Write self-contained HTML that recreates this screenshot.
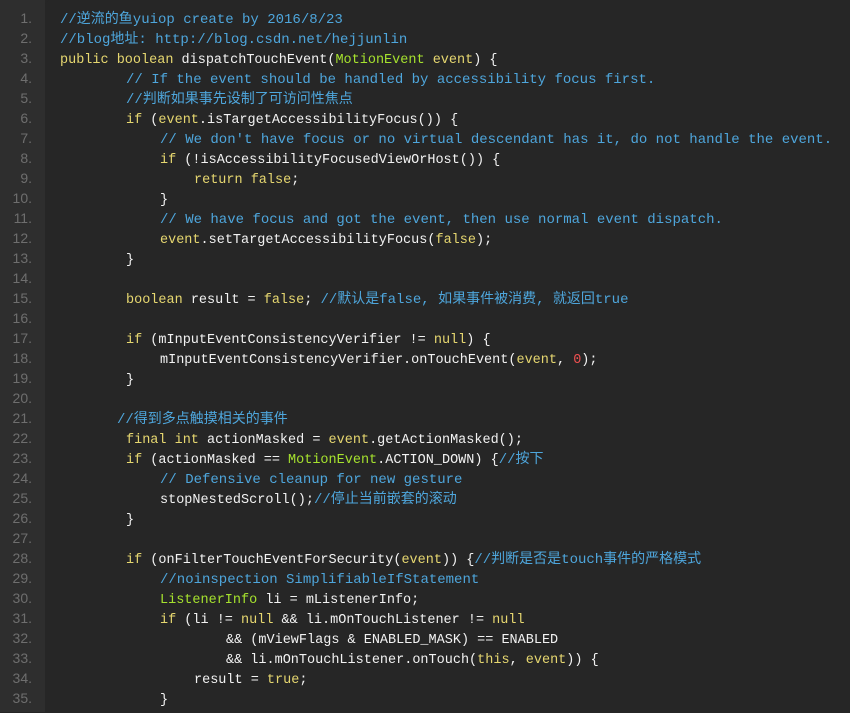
<!DOCTYPE html>
<html><head><meta charset="utf-8"><style>
html,body{margin:0;padding:0;background:#262626;width:850px;height:712px;overflow:hidden}
.g{position:absolute;left:0;top:0;width:45px;height:712px;background:#2e2e2e}
.c{position:absolute;left:45px;top:0;right:0;height:712px;background:#262626;border-radius:6px 0 0 0}
.l{position:absolute;height:20px;line-height:20px;margin-top:4px;font:13.5px "Liberation Mono","Noto Sans CJK SC",monospace;color:#f2f2f2;white-space:pre;overflow:visible}
.l span{line-height:12px}
.n{position:absolute;left:0;width:32px;text-align:right;height:20px;line-height:20px;margin-top:1px;font:14px "Liberation Sans",sans-serif;color:#6e6e6e}
.m{color:#4ea6dc;font-size:14px}.k{color:#e6d770}.t{color:#a6e22e}.r{color:#f05050}
</style></head><body>
<div class="g"></div><div class="c"></div>
<div class="n" style="top:9px">1.</div><div class="l" style="top:9px;left:60px"><span class="m">//逆流的鱼yuiop create by 2016/8/23</span></div>
<div class="n" style="top:29px">2.</div><div class="l" style="top:29px;left:60px"><span class="m">//blog地址: http://blog.csdn.net/hejjunlin</span></div>
<div class="n" style="top:49px">3.</div><div class="l" style="top:49px;left:60px"><span class="k">public boolean</span> dispatchTouchEvent(<span class="t">MotionEvent</span> <span class="k">event</span>) {</div>
<div class="n" style="top:69px">4.</div><div class="l" style="top:69px;left:126px"><span class="m">// If the event should be handled by accessibility focus first.</span></div>
<div class="n" style="top:89px">5.</div><div class="l" style="top:89px;left:126px"><span class="m">//判断如果事先设制了可访问性焦点</span></div>
<div class="n" style="top:109px">6.</div><div class="l" style="top:109px;left:126px"><span class="k">if</span> (<span class="k">event</span>.isTargetAccessibilityFocus()) {</div>
<div class="n" style="top:129px">7.</div><div class="l" style="top:129px;left:160px"><span class="m">// We don't have focus or no virtual descendant has it, do not handle the event.</span></div>
<div class="n" style="top:149px">8.</div><div class="l" style="top:149px;left:160px"><span class="k">if</span> (!isAccessibilityFocusedViewOrHost()) {</div>
<div class="n" style="top:169px">9.</div><div class="l" style="top:169px;left:194px"><span class="k">return false</span>;</div>
<div class="n" style="top:189px">10.</div><div class="l" style="top:189px;left:160px">}</div>
<div class="n" style="top:209px">11.</div><div class="l" style="top:209px;left:160px"><span class="m">// We have focus and got the event, then use normal event dispatch.</span></div>
<div class="n" style="top:229px">12.</div><div class="l" style="top:229px;left:160px"><span class="k">event</span>.setTargetAccessibilityFocus(<span class="k">false</span>);</div>
<div class="n" style="top:249px">13.</div><div class="l" style="top:249px;left:126px">}</div>
<div class="n" style="top:269px">14.</div>
<div class="n" style="top:289px">15.</div><div class="l" style="top:289px;left:126px"><span class="k">boolean</span> result = <span class="k">false</span>; <span class="m">//默认是false, 如果事件被消费, 就返回true</span></div>
<div class="n" style="top:309px">16.</div>
<div class="n" style="top:329px">17.</div><div class="l" style="top:329px;left:126px"><span class="k">if</span> (mInputEventConsistencyVerifier != <span class="k">null</span>) {</div>
<div class="n" style="top:349px">18.</div><div class="l" style="top:349px;left:160px">mInputEventConsistencyVerifier.onTouchEvent(<span class="k">event</span>, <span class="r">0</span>);</div>
<div class="n" style="top:369px">19.</div><div class="l" style="top:369px;left:126px">}</div>
<div class="n" style="top:389px">20.</div>
<div class="n" style="top:409px">21.</div><div class="l" style="top:409px;left:117px"><span class="m">//得到多点触摸相关的事件</span></div>
<div class="n" style="top:429px">22.</div><div class="l" style="top:429px;left:126px"><span class="k">final int</span> actionMasked = <span class="k">event</span>.getActionMasked();</div>
<div class="n" style="top:449px">23.</div><div class="l" style="top:449px;left:126px"><span class="k">if</span> (actionMasked == <span class="t">MotionEvent</span>.ACTION_DOWN) {<span class="m">//按下</span></div>
<div class="n" style="top:469px">24.</div><div class="l" style="top:469px;left:160px"><span class="m">// Defensive cleanup for new gesture</span></div>
<div class="n" style="top:489px">25.</div><div class="l" style="top:489px;left:160px">stopNestedScroll();<span class="m">//停止当前嵌套的滚动</span></div>
<div class="n" style="top:509px">26.</div><div class="l" style="top:509px;left:126px">}</div>
<div class="n" style="top:529px">27.</div>
<div class="n" style="top:549px">28.</div><div class="l" style="top:549px;left:126px"><span class="k">if</span> (onFilterTouchEventForSecurity(<span class="k">event</span>)) {<span class="m">//判断是否是touch事件的严格模式</span></div>
<div class="n" style="top:569px">29.</div><div class="l" style="top:569px;left:160px"><span class="m">//noinspection SimplifiableIfStatement</span></div>
<div class="n" style="top:589px">30.</div><div class="l" style="top:589px;left:160px"><span class="t">ListenerInfo</span> li = mListenerInfo;</div>
<div class="n" style="top:609px">31.</div><div class="l" style="top:609px;left:160px"><span class="k">if</span> (li != <span class="k">null</span> &amp;&amp; li.mOnTouchListener != <span class="k">null</span></div>
<div class="n" style="top:629px">32.</div><div class="l" style="top:629px;left:226px">&amp;&amp; (mViewFlags &amp; ENABLED_MASK) == ENABLED</div>
<div class="n" style="top:649px">33.</div><div class="l" style="top:649px;left:226px">&amp;&amp; li.mOnTouchListener.onTouch(<span class="k">this</span>, <span class="k">event</span>)) {</div>
<div class="n" style="top:669px">34.</div><div class="l" style="top:669px;left:194px">result = <span class="k">true</span>;</div>
<div class="n" style="top:689px">35.</div><div class="l" style="top:689px;left:160px">}</div>
</body></html>
